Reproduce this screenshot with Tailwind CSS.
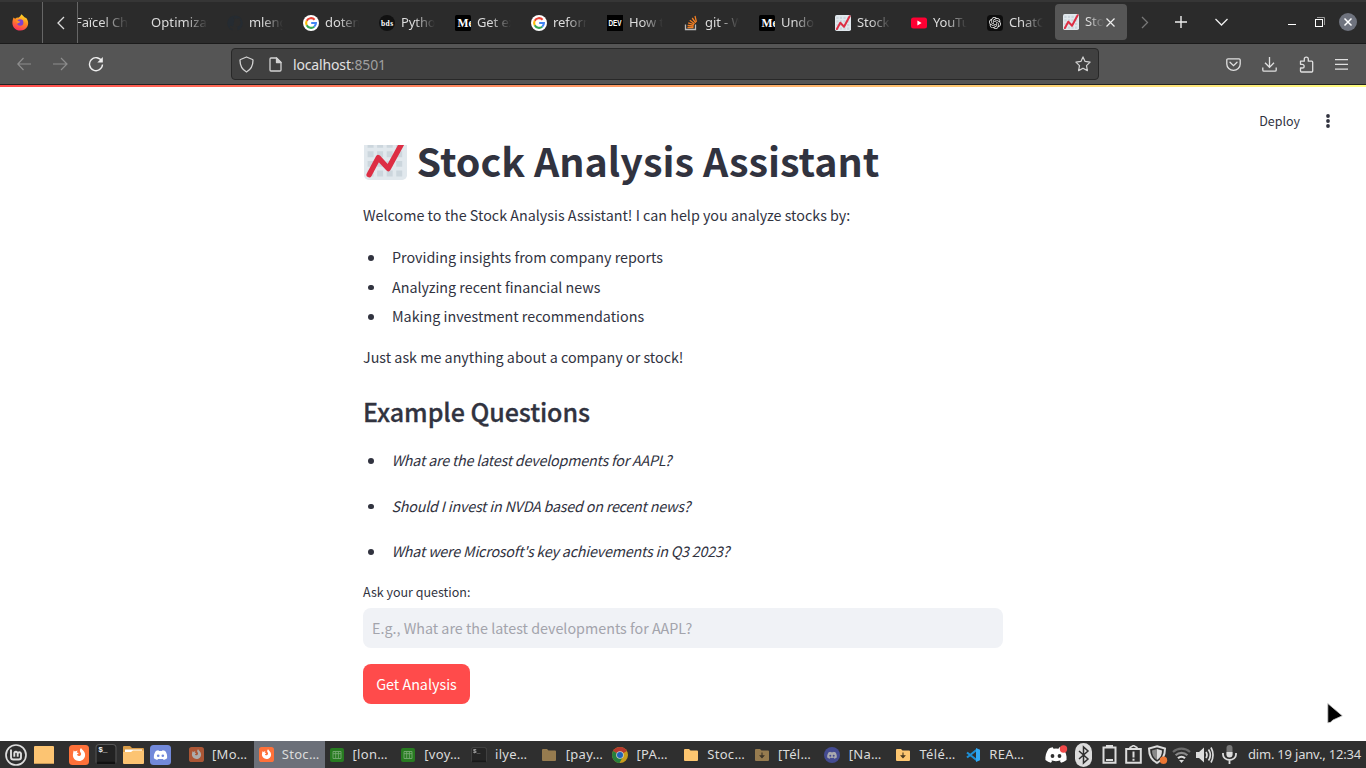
<!DOCTYPE html>
<html lang="fr">
<head>
<meta charset="utf-8">
<title>Stock Analysis Assistant</title>
<script src="https://cdn.jsdelivr.net/npm/@tailwindcss/browser@4"></script>
</head>
<body class="w-[1366px] h-[768px] overflow-hidden bg-white flex flex-col font-['Noto_Sans','Open_Sans',sans-serif]">

<svg width="0" height="0" class="absolute">
  <defs>
    <linearGradient id="ffg" x1="0.7" y1="0" x2="0.3" y2="1"><stop offset="0" stop-color="#ffe226"/><stop offset=".45" stop-color="#ff8a22"/><stop offset="1" stop-color="#ff2a5f"/></linearGradient>
    <symbol id="google" viewBox="0 0 16 16"><circle cx="8" cy="8" r="8" fill="#fff"/><g fill="none" stroke-width="2.1"><path d="M11.6 4.7A4.9 4.9 0 0 0 3.7 5.7" stroke="#ea4335"/><path d="M3.7 5.7a4.9 4.9 0 0 0 0 4.6" stroke="#fbbc05"/><path d="M3.7 10.3a4.9 4.9 0 0 0 7.5 1.4" stroke="#34a853"/><path d="M11.2 11.7A4.9 4.9 0 0 0 12.9 8H8.2" stroke="#4285f4"/></g></symbol>
    <symbol id="chart" viewBox="0 0 36 36"><rect width="36" height="36" rx="4" fill="#e1e8ed"/><path fill="#ccd6dd" d="M3 4h5v5H3zM11 4h5v5h-5zM19 4h5v5h-5zM27 4h5v5h-5zM3 12h5v5H3zM11 12h5v5h-5zM19 12h5v5h-5zM27 12h5v5h-5zM3 20h5v5H3zM11 20h5v5h-5zM19 20h5v5h-5zM27 20h5v5h-5zM3 28h5v5H3zM11 28h5v5h-5zM19 28h5v5h-5zM27 28h5v5h-5z"/><path d="M4.300 31.600L11.900 17.300l8.400 9.100L33 3" fill="none" stroke="#dd2e44" stroke-width="4.500" stroke-linecap="round" stroke-linejoin="round"/></symbol>
    <symbol id="medium" viewBox="0 0 16 16"><rect width="16" height="16" rx="1.500" fill="#000"/><text x="2.500" y="12.300" font-family="Liberation Serif" font-weight="700" font-size="13" fill="#fff" textLength="16" lengthAdjust="spacingAndGlyphs">Me</text></symbol>
    <symbol id="fox" viewBox="0 0 20 20"><rect width="20" height="20" rx="3.500" fill="#ff7139"/><path fill="#fff" d="M4.600 5.500c.5.200 1 .6 1.300 1 .8-.7 2-.9 3-.7-.8.400-1.200 1-1.200 1.700l1.900.4c0 .8-1.200 1-1.700 1.700.3 1.100 1.400 1.700 2.500 1.400 1-.2 1.800-1 1.700-2.200-.1-1.400-1.300-1.900-1.200-3.400 0-.9.500-1.700 1.200-2.300.3 1.500 3.900 3 4 6.600.1 3.700-2.600 6.300-6.100 6.300s-6.300-2.800-6.100-6.200c.1-1.600.5-2.900.7-4.300z"/></symbol>
    <symbol id="term" viewBox="0 0 20 20"><rect x=".5" y=".5" width="19" height="19" rx="3" fill="#222" stroke="#555"/><rect x="1" y="17" width="18" height="2.500" rx="1.200" fill="#111"/><text x="2.500" y="8" font-family="Liberation Mono" font-size="7.500" font-weight="700" fill="#eee">$_</text></symbol>
    <symbol id="folder" viewBox="0 0 14 12"><path fill="#fdc670" d="M0 1q0-1 1-1h4l1.500 1.500H13q1 0 1 1V11q0 1-1 1H1q-1 0-1-1z"/></symbol>
    <symbol id="dfolder" viewBox="0 0 14 12"><path fill="#fdc670" d="M0 1q0-1 1-1h4l1.500 1.500H13q1 0 1 1V11q0 1-1 1H1q-1 0-1-1z"/><path d="M7 3.500v5M5.300 6.800L7 8.700l1.700-1.900z" stroke="#4b3a20" stroke-width="1.100" fill="#4b3a20"/></symbol>
    <symbol id="disc" viewBox="0 0 24 18"><path d="M8.500.3C6.800.6 5.300 1.100 4 1.800 1.200 5.800.1 9.800.5 14.300c1.900 1.500 3.900 2.500 6 3l1.400-2.300c-.8-.3-1.500-.6-2.200-1 4 2 8.600 2 12.600 0-.7.4-1.400.7-2.200 1l1.400 2.300c2.100-.5 4.100-1.500 6-3 .5-5.200-.9-9-3.500-12.500-1.300-.7-2.800-1.200-4.500-1.500l-.8 1.500a16 16 0 0 0-5.400 0z"/></symbol>
    <symbol id="sheet" viewBox="0 0 14 14"><rect width="14" height="14" rx="2" fill="#277b20"/><path fill="none" stroke="#77a873" stroke-width=".9" d="M3 3.500h8v7H3zM5.700 3.500v7M8.400 3.500v7M3 5.700h8"/></symbol>
  </defs>
</svg>

<!-- Tab strip -->
<header class="h-[44px] shrink-0 bg-[#2b2b2b] border-t-2 border-t-[#363636] border-b border-b-[#1b1b1b] flex text-[13px] text-[#dcdcdc] tracking-[-0.1px]">
  <div class="w-[43px] shrink-0 border-r border-[#666] flex items-center justify-center pr-px">
    <svg width="17" height="17" viewBox="0 0 17 17"><path fill="url(#ffg)" d="M1.500 3.500l1.600 1.300L5 3.500l1.200.3L8 2.500 9.500.2l3 3 2 1c2.800 4.200 2 8.800-2 11.300-3.500 2-8 1.200-10.500-1.800C-.5 10.500.4 6.500 1.500 3.500z"/><circle cx="8.200" cy="8.500" r="3.200" fill="#8040d0"/><path d="M4 6c2 0 2 1.600 4.300 1.600-.4 1.600-2 1.300-3 2.200" fill="#ff9125"/></svg>
  </div>
  <div class="w-[35px] shrink-0 border-r border-[#666] flex items-center justify-center pl-[2px]">
    <svg width="10" height="14" viewBox="0 0 10 14" fill="none" stroke="#ddd" stroke-width="1.300"><path d="M8 1L2 7l6 6"/></svg>
  </div>
  <div class="w-[65px] shrink-0 overflow-hidden flex items-center whitespace-nowrap"><span class="w-[54px] ml-[-3px] overflow-hidden mask-r-from-50%">Faïcel Cha</span></div>
  <div class="w-[76px] shrink-0 px-2 flex items-center"><span class="w-[57px] overflow-hidden whitespace-nowrap mask-r-from-60% tracking-[0.1px]">Optimizat</span></div>
  <div class="w-[76px] shrink-0 pl-2 flex items-center gap-[6px]"><svg width="16" height="16" viewBox="0 0 16 16"><path fill="#252b31" d="M8 .5a7.700 7.700 0 0 0-2.500 15v-2c-2 .4-2.500-1-2.800-1.600M8 .5a7.700 7.700 0 0 1 2.500 15V13c0-.8-.3-1.200-.6-1.500 2-.2 3.700-1 3.700-4 0-1-.3-1.800-.9-2.400.1-.3.400-1.200-.1-2.200-.8 0-1.700.5-2.400.9a8 8 0 0 0-4.300 0c-.8-.5-1.600-.9-2.400-.9-.5 1-.2 1.900-.1 2.200-.6.600-.9 1.400-.9 2.400 0 3 1.700 3.800 3.700 4"/></svg><span class="w-[34px] overflow-hidden whitespace-nowrap mask-r-from-40%">mlengi</span></div>
  <div class="w-[76px] shrink-0 pl-2 flex items-center gap-[6px]"><svg width="16" height="16"><use href="#google"/></svg><span class="w-[34px] overflow-hidden whitespace-nowrap mask-r-from-40%">doteny</span></div>
  <div class="w-[76px] shrink-0 pl-2 flex items-center gap-[6px]"><svg width="16" height="16" viewBox="0 0 16 16"><circle cx="8" cy="8" r="8" fill="#111"/><text x="2" y="10.500" font-family="Liberation Serif" font-weight="700" font-size="7.500" fill="#fff" textLength="12">bds</text></svg><span class="w-[34px] overflow-hidden whitespace-nowrap mask-r-from-40%">Python</span></div>
  <div class="w-[76px] shrink-0 pl-2 flex items-center gap-[6px]"><svg width="16" height="16"><use href="#medium"/></svg><span class="w-[34px] overflow-hidden whitespace-nowrap mask-r-from-40%">Get exp</span></div>
  <div class="w-[76px] shrink-0 pl-2 flex items-center gap-[6px]"><svg width="16" height="16"><use href="#google"/></svg><span class="w-[34px] overflow-hidden whitespace-nowrap mask-r-from-40%">reform</span></div>
  <div class="w-[76px] shrink-0 pl-2 flex items-center gap-[6px]"><svg width="16" height="16" viewBox="0 0 16 16"><rect width="16" height="16" fill="#000"/><text x="1.500" y="11" font-family="Liberation Sans Narrow, Liberation Sans" font-weight="700" font-size="8.500" fill="#fff" textLength="13" lengthAdjust="spacingAndGlyphs">DEV</text></svg><span class="w-[34px] overflow-hidden whitespace-nowrap mask-r-from-40%">How to</span></div>
  <div class="w-[76px] shrink-0 pl-2 flex items-center gap-[6px]"><svg width="16" height="16" viewBox="0 0 16 16" fill="none" stroke="#f48024" stroke-width="1.300"><path stroke="#bcbbbb" d="M2.500 9.500v5h10v-5"/><path d="M4.500 12.500h6M4.600 10.300l6 .7M5.200 7.800l5.700 1.900M6.800 5.300l4.800 3.500M9.200 3l3.500 4.900M12 1l1.400 5.800"/></svg><span class="w-[34px] overflow-hidden whitespace-nowrap mask-r-from-40%">git - Wh</span></div>
  <div class="w-[76px] shrink-0 pl-2 flex items-center gap-[6px]"><svg width="16" height="16"><use href="#medium"/></svg><span class="w-[34px] overflow-hidden whitespace-nowrap mask-r-from-40%">Undo a</span></div>
  <div class="w-[76px] shrink-0 pl-2 flex items-center gap-[6px]"><svg width="16" height="16"><use href="#chart"/></svg><span class="w-[34px] overflow-hidden whitespace-nowrap mask-r-from-40%">Stock A</span></div>
  <div class="w-[76px] shrink-0 pl-2 flex items-center gap-[6px]"><svg width="16" height="16" viewBox="0 0 16 16"><rect y="2.500" width="16" height="11" rx="2.500" fill="#ff0033"/><path d="M6.400 5.600v4.800l4.200-2.400z" fill="#fff"/></svg><span class="w-[34px] overflow-hidden whitespace-nowrap mask-r-from-40%">YouTub</span></div>
  <div class="w-[76px] shrink-0 pl-2 flex items-center gap-[6px]"><svg width="16" height="16" viewBox="0 0 16 16"><rect width="16" height="16" rx="3.500" fill="#0d0d0d"/><path transform="translate(2 2) scale(.5)" fill="#f0f0f0" d="M22.2819 9.8211a5.9847 5.9847 0 0 0-.5157-4.9108 6.0462 6.0462 0 0 0-6.5098-2.9A6.0651 6.0651 0 0 0 4.9807 4.1818a5.9847 5.9847 0 0 0-3.9977 2.9 6.0462 6.0462 0 0 0 .7427 7.0966 5.98 5.98 0 0 0 .511 4.9107 6.051 6.051 0 0 0 6.5146 2.9001A5.9847 5.9847 0 0 0 13.2599 24a6.0557 6.0557 0 0 0 5.7718-4.2058 5.9894 5.9894 0 0 0 3.9977-2.9001 6.0557 6.0557 0 0 0-.7475-7.0729zm-9.022 12.6081a4.4755 4.4755 0 0 1-2.8764-1.0408l.1419-.0804 4.7783-2.7582a.7948.7948 0 0 0 .3927-.6813v-6.7369l2.02 1.1686a.071.071 0 0 1 .038.052v5.5826a4.504 4.504 0 0 1-4.4945 4.4944zm-9.6607-4.1254a4.4708 4.4708 0 0 1-.5346-3.0137l.142.0852 4.783 2.7582a.7712.7712 0 0 0 .7806 0l5.8428-3.3685v2.3324a.0804.0804 0 0 1-.0332.0615L9.74 19.9502a4.4992 4.4992 0 0 1-6.1408-1.6464zM2.3408 7.8956a4.485 4.485 0 0 1 2.3655-1.9728V11.6a.7664.7664 0 0 0 .3879.6765l5.8144 3.3543-2.0201 1.1685a.0757.0757 0 0 1-.071 0l-4.8303-2.7865A4.504 4.504 0 0 1 2.3408 7.872zm16.5963 3.8558L13.1038 8.364 15.1192 7.2a.0757.0757 0 0 1 .071 0l4.8303 2.7913a4.4944 4.4944 0 0 1-.6765 8.1042v-5.6772a.79.79 0 0 0-.407-.667zm2.0107-3.0231l-.142-.0852-4.7735-2.7818a.7759.7759 0 0 0-.7854 0L9.409 9.2297V6.8974a.0662.0662 0 0 1 .0284-.0615l4.8303-2.7866a4.4992 4.4992 0 0 1 6.6802 4.66zM8.3065 12.863l-2.02-1.1638a.0804.0804 0 0 1-.038-.0567V6.0742a4.4992 4.4992 0 0 1 7.3757-3.4537l-.142.0805L8.704 5.459a.7948.7948 0 0 0-.3927.6813zm1.0976-2.3654l2.602-1.4998 2.6069 1.4998v2.9994l-2.5974 1.4997-2.6067-1.4997Z"/></svg><span class="w-[34px] overflow-hidden whitespace-nowrap mask-r-from-40%">ChatGP</span></div>
  <div class="w-[72px] h-[36px] mt-[2px] shrink-0 pl-2 flex items-center rounded bg-[#565656]"><svg width="16" height="16"><use href="#chart"/></svg><span class="ml-[6px] w-[19px] overflow-hidden whitespace-nowrap mask-r-from-20%">Stock</span><svg class="ml-[2px]" width="9" height="9" viewBox="0 0 9 9" stroke="#eee" stroke-width="1.200"><path d="M.5.500l8 8M8.500.500l-8 8"/></svg></div>
  <div class="flex-1 flex items-center h-[40px]">
    <svg class="ml-[14px]" width="8" height="13" viewBox="0 0 8 13" fill="none" stroke="#777" stroke-width="1.300"><path d="M1 1l5.500 5.500L1 12"/></svg>
    <svg class="ml-[26px]" width="12" height="12" viewBox="0 0 12 12" stroke="#eee" stroke-width="1.400"><path d="M6 0v12M0 6h12"/></svg>
    <svg class="ml-[28px]" width="13" height="8" viewBox="0 0 13 8" fill="none" stroke="#eee" stroke-width="1.300"><path d="M.5 1l6 6 6-6"/></svg>
    <svg class="ml-[60px] mt-[4px]" width="8" height="1"><rect width="8" height="1" fill="#fff"/></svg>
    <svg class="ml-[19px]" width="10" height="10" viewBox="0 0 10 10" fill="none"><path d="M2 .5h7.500V8" stroke="#999"/><rect x=".5" y="2.500" width="7" height="7" stroke="#fff"/></svg>
    <svg class="ml-[14px]" width="18" height="18" viewBox="0 0 18 18"><circle cx="9" cy="9" r="9" fill="#6f737e"/><path d="M5.500 5.500l7 7M12.500 5.500l-7 7" stroke="#fff" stroke-width="1.500"/></svg>
  </div>
</header>

<!-- Navigation toolbar -->
<nav class="h-[41px] shrink-0 bg-[#555] border-b border-b-[#222] flex items-center">
  <svg class="ml-[17px]" width="15" height="14" viewBox="0 0 15 14" fill="none" stroke="#8d8d8d" stroke-width="1.200"><path d="M14 7H.8M6.500 1L.8 7l5.700 6"/></svg>
  <svg class="ml-[21px]" width="15" height="14" viewBox="0 0 15 14" fill="none" stroke="#8d8d8d" stroke-width="1.200"><path d="M0 7h13.700M8 1l6 6-6 6"/></svg>
  <svg class="ml-[20px]" width="16" height="16" viewBox="0 0 16 16" fill="none" stroke="#eee" stroke-width="1.400"><path d="M13.800 5.200A6.500 6.500 0 1 0 14.500 8.500"/><path d="M14.800 1v5.500H9.300z" fill="#eee" stroke="none"/></svg>
  <div class="ml-[127px] w-[868px] h-[32px] rounded border border-[#282828] bg-[#404040] flex items-center">
    <svg class="ml-[7px]" width="15" height="17" viewBox="0 0 15 17" fill="none" stroke="#d2d2d2" stroke-width="1.300" stroke-linejoin="round"><path d="M7.500 1l6 2.500q.5.200.5.800c0 5-1.500 9-6.500 11.700C2.500 13.300 1 9.300 1 4.300q0-.6.500-.8z"/></svg>
    <svg class="ml-[15px]" width="13" height="15" viewBox="0 0 13 15" fill="none" stroke="#d2d2d2" stroke-width="1.300" stroke-linejoin="round"><path d="M2 1h5.500L12 5.500V13q0 1-1 1H2q-1 0-1-1V2q0-1 1-1z"/><path d="M7.500 1v4.500H12z" fill="#d2d2d2"/></svg>
    <span class="ml-[11px] text-[14px] text-[#e2e2e2] tracking-[-0.15px]">localhost<span class="text-[#9f9f9f]">:8501</span></span>
    <svg class="ml-auto mr-[7px]" width="16" height="16" viewBox="0 0 16 16" fill="none" stroke="#d2d2d2" stroke-width="1.200" stroke-linejoin="round"><path d="M8 .9l2.100 4.500 5 .7-3.600 3.500.9 5L8 12.200l-4.400 2.400.9-5L.9 6.100l5-.7z"/></svg>
  </div>
  <svg class="ml-[127px]" width="15" height="13" viewBox="0 0 15 13" fill="none" stroke="#e0e0e0" stroke-width="1.300"><path d="M2 .8h11q1.200 0 1.200 1.200v4a6.700 6.300 0 0 1-13.400 0V2Q.8.800 2 .8z"/><path d="M4 4.300l3.500 3.400L11 4.300" stroke-linecap="round"/></svg>
  <svg class="ml-[21px]" width="15" height="15" viewBox="0 0 15 15" fill="none" stroke="#e0e0e0" stroke-width="1.300"><path d="M7.500 0v10M3 5.800l4.500 4.500L12 5.800M.8 10.500V13q0 1.200 1.200 1.200h11q1.200 0 1.200-1.200v-2.500"/></svg>
  <svg class="ml-[22px]" width="15" height="17" viewBox="0 0 15 17" fill="none" stroke="#e0e0e0" stroke-width="1.300" stroke-linejoin="round"><path d="M1.500 7V5.200h3.800V3.100a2 2 0 0 1 4 0v2.100h3.400q1 0 1 1V15q0 1-1 1H2.500q-1 0-1-1v-3H3.300a1.800 1.800 0 0 0 0-3.700H1.500z"/></svg>
  <svg class="ml-[21px]" width="13" height="11" viewBox="0 0 13 11" fill="#e0e0e0"><path d="M0 0h13v1.200H0zM0 4.800h13V6H0zM0 9.600h13v1.200H0z"/></svg>
</nav>

<!-- Page -->
<div class="h-[2px] shrink-0 bg-linear-to-r/srgb from-[#ff4b4b] to-[#fffd80]"></div>
<div class="flex-1 min-h-0 flex flex-col text-[#31333f] font-['Noto_Sans_CJK_SC',sans-serif]">
  <div class="h-[58px] shrink-0 flex items-center justify-end pt-[10px] pr-[36px]">
    <span class="text-[12.500px]">Deploy</span>
    <svg class="ml-[26px]" width="4" height="14" viewBox="0 0 4 14" fill="#31333f"><circle cx="2" cy="2" r="1.900"/><circle cx="2" cy="7" r="1.900"/><circle cx="2" cy="12" r="1.900"/></svg>
  </div>
  <main class="w-[640px] ml-[363px] flex flex-col text-[14.320px] whitespace-nowrap">
    <h1 class="h-[35px] flex items-start font-bold text-[39.450px] leading-[34px]">
      <svg class="shrink-0 ml-[0.500px]" width="43" height="35" viewBox="0 8 43 35"><use href="#chart" width="43" height="43"/></svg>
      <span class="ml-[10px] -mt-[2px]">Stock Analysis Assistant</span>
    </h1>
    <p class="mt-[22px] leading-[26px]">Welcome to the Stock Analysis Assistant! I can help you analyze stocks by:</p>
    <ul class="mt-[16px] flex flex-col gap-[3.500px] leading-[26px]">
      <li class="flex items-center before:size-[5.500px] before:rounded-full before:bg-[#31333f] before:ml-[5px] before:mr-[18.500px] before:mt-[2px]">Providing insights from company reports</li>
      <li class="flex items-center before:size-[5.500px] before:rounded-full before:bg-[#31333f] before:ml-[5px] before:mr-[18.500px] before:mt-[2px]">Analyzing recent financial news</li>
      <li class="flex items-center before:size-[5.500px] before:rounded-full before:bg-[#31333f] before:ml-[5px] before:mr-[18.500px] before:mt-[2px]">Making investment recommendations</li>
    </ul>
    <p class="mt-[15px] leading-[26px]">Just ask me anything about a company or stock!</p>
    <h3 class="mt-[24px] leading-[34px] text-[25.060px] font-medium tracking-[-0.08px] [-webkit-text-stroke:0.300px_#31333f]">Example Questions</h3>
    <ul class="mt-[19px] flex flex-col gap-[19.500px] leading-[26px] italic tracking-[-0.210px]">
      <li class="flex items-center before:size-[5.500px] before:rounded-full before:bg-[#31333f] before:ml-[5px] before:mr-[18px] before:mt-[2px]">What are the latest developments for AAPL?</li>
      <li class="flex items-center before:size-[5.500px] before:rounded-full before:bg-[#31333f] before:ml-[5px] before:mr-[18px] before:mt-[2px]">Should I invest in NVDA based on recent news?</li>
      <li class="flex items-center before:size-[5.500px] before:rounded-full before:bg-[#31333f] before:ml-[5px] before:mr-[18px] before:mt-[2px]">What were Microsoft's key achievements in Q3 2023?</li>
    </ul>
    <label class="mt-[18px] leading-[20px] text-[12.500px]">Ask your question:</label>
    <div class="mt-[6px] h-[40px] rounded-lg bg-[#f0f2f6] pl-[9px] flex items-center text-[#a3a4ac]">E.g., What are the latest developments for AAPL?</div>
    <button class="mt-[16px] w-[107px] h-[40px] rounded-lg bg-[#ff4b4b] text-white flex items-center justify-center">Get Analysis</button>
  </main>
</div>

<!-- Desktop panel -->
<footer class="h-[27px] shrink-0 bg-[#2f2f2f] flex items-center text-[13px] text-[#dcdcdc] whitespace-nowrap">
  <svg class="ml-[5px]" width="22" height="22" viewBox="0 0 22 22" fill="none" stroke="#ddd"><circle cx="11" cy="11" r="10" stroke-width="1.700"/><path stroke-width="1.900" d="M6 5.500v7.700q0 2.300 2.300 2.300h5.400q2.300 0 2.300-2.300V9.500a1.700 1.700 0 0 0-3.300 0v3.300M12.700 9.500a1.700 1.700 0 0 0-3.400 0v3.300"/></svg>
  <svg class="ml-[7px]" width="20" height="18"><rect width="20" height="18" rx="1" fill="#fcc472"/><rect y="17" width="20" height="1" fill="#c79a57"/></svg>
  <svg class="ml-[15px]" width="20" height="20"><use href="#fox"/></svg>
  <svg class="ml-[6px]" width="22" height="21"><use href="#term"/></svg>
  <svg class="ml-[6px]" width="21" height="18" viewBox="0 0 21 18"><path fill="#d99c48" d="M0 1q0-1 1-1h6l2 2h11q1 0 1 1v5H0z"/><path fill="#fff" d="M2 3.500h17v3H2z"/><path fill="#fcc472" d="M0 6h8l2-1.500h11V17q0 1-1 1H1q-1 0-1-1z"/></svg>
  <svg class="ml-[6px]" width="21" height="20" viewBox="0 0 21 20"><rect width="21" height="20" rx="3.500" fill="#7289da"/><use href="#disc" x="3.500" y="5" width="14" height="10.500" fill="#fff"/><circle cx="8.200" cy="10.800" r="1.300" fill="#7289da"/><circle cx="12.800" cy="10.800" r="1.300" fill="#7289da"/></svg>
  <div class="ml-[12px] w-[849px] h-[27px] grid grid-cols-12 tracking-[0.3px]">
    <div class="flex items-center pl-[6px]"><svg class="opacity-60" width="15" height="15"><use href="#fox"/></svg><span class="ml-[8px]">[Mo…</span></div>
    <div class="flex items-center pl-[5px] bg-[#6c7079]"><svg width="15" height="15"><use href="#fox"/></svg><span class="ml-[8px]">Stoc…</span></div>
    <div class="flex items-center pl-[5px]"><svg width="14" height="14"><use href="#sheet"/></svg><span class="ml-[9px]">[lon…</span></div>
    <div class="flex items-center pl-[6px]"><svg width="14" height="14"><use href="#sheet"/></svg><span class="ml-[9px]">[voy…</span></div>
    <div class="flex items-center pl-[5px]"><svg class="opacity-70" width="16" height="16"><use href="#term"/></svg><span class="ml-[8px]">ilye…</span></div>
    <div class="flex items-center pl-[5px]"><svg class="opacity-50" width="14" height="12"><use href="#folder"/></svg><span class="ml-[10px]">[pay…</span></div>
    <div class="flex items-center pl-[4px]"><svg class="opacity-75" width="16" height="16" viewBox="0 0 16 16"><circle cx="8" cy="8" r="8" fill="#fbc116"/><path d="M8 8L1.100 4A8 8 0 0 1 14.900 4z" fill="#e33b2e"/><path d="M8 8L1.100 4A8 8 0 0 0 7.500 16L11 9.500z" fill="#249a41"/><circle cx="8" cy="8" r="3.800" fill="#fff"/><circle cx="8" cy="8" r="3" fill="#1a73e8"/></svg><span class="ml-[9px]">[PA…</span></div>
    <div class="flex items-center pl-[6px]"><svg width="14" height="12"><use href="#folder"/></svg><span class="ml-[9px]">Stoc…</span></div>
    <div class="flex items-center pl-[6px]"><svg class="opacity-50" width="14" height="12"><use href="#dfolder"/></svg><span class="ml-[9px]">[Tél…</span></div>
    <div class="flex items-center pl-[4px]"><svg width="16" height="16" viewBox="0 0 16 16"><circle cx="8" cy="8" r="8" fill="#444b91"/><use href="#disc" x="3" y="4.500" width="10" height="7.500" fill="#a9a9ae"/><circle cx="6.300" cy="8.700" r="1" fill="#444b91"/><circle cx="9.700" cy="8.700" r="1" fill="#444b91"/></svg><span class="ml-[9px]">[Na…</span></div>
    <div class="flex items-center pl-[5px]"><svg width="14" height="12"><use href="#dfolder"/></svg><span class="ml-[10px]">Télé…</span></div>
    <div class="flex items-center pl-[5px]"><svg width="14" height="14" viewBox="0 0 14 14"><path d="M10.500 2L1 9.500M10.500 12L1 4.500" stroke="#1d8fd6" stroke-width="2.200"/><path d="M10 0l4 1.700v10.600L10 14z" fill="#2fa8f5"/></svg><span class="ml-[9px]">REA…</span></div>
  </div>
  <div class="ml-[13px] flex items-center">
    <svg width="24" height="20" viewBox="0 0 24 20"><use href="#disc" x="0" y="2" width="22" height="16.500" fill="#fff"/><circle cx="7.500" cy="11" r="1.900" fill="#2f2f2f"/><circle cx="14.500" cy="11" r="1.900" fill="#2f2f2f"/><circle cx="18.500" cy="4" r="3.700" fill="#f04848"/></svg>
    <svg class="ml-[6px]" width="17" height="24" viewBox="0 0 17 24"><rect width="17" height="24" rx="8.500" fill="#dcdcdc"/><path d="M4 8l9 8-4.500 4V4L13 8l-9 8" fill="none" stroke="#2f2f2f" stroke-width="1.500"/></svg>
    <svg class="ml-[10px]" width="15" height="19" viewBox="0 0 15 19"><path d="M5 2V1h5v1M1.500 2.500h12v15.300h-12z" fill="none" stroke="#dcdcdc" stroke-width="2"/><path d="M4 14h7v2H4z" fill="#dcdcdc"/></svg>
    <svg class="ml-[8px]" width="17" height="19" viewBox="0 0 17 19"><path d="M1.200 4h14.600v13.800H1.200z" fill="none" stroke="#dcdcdc" stroke-width="2"/><path d="M5 4V2.500L8.500.500 12 2.500V4" fill="none" stroke="#dcdcdc" stroke-width="1.500"/><path d="M7.500 6.500h2v6h-2zM7.500 13.800h2v2h-2z" fill="#dcdcdc"/></svg>
    <svg class="ml-[6px]" width="20" height="19" viewBox="0 0 20 19"><path d="M9 1.200l8 2.300c0 6.500-2 11.500-8 14.300C3 15 1 10 1 3.500z" fill="none" stroke="#dcdcdc" stroke-width="2"/><path d="M9 4v11c-3.700-2.300-5-5.500-5-9.500z" fill="#888"/><path d="M9 4v11c3.700-2.300 5-5.500 5-9.500z" fill="#dcdcdc"/><circle cx="15.500" cy="15.200" r="3.700" fill="#ee7733"/></svg>
    <svg class="ml-[4px]" width="19" height="16" viewBox="0 0 19 16" fill="none" stroke-width="2.200"><path d="M1 5a12.500 12.500 0 0 1 17 0" stroke="#6a6a6a"/><path d="M3.600 8.200a8.700 8.700 0 0 1 11.800 0" stroke="#8a8a8a"/><path d="M6 11.300a5 5 0 0 1 7 0" stroke="#dcdcdc"/><path d="M9.500 16l-2.500-3h5z" fill="#dcdcdc"/></svg>
    <svg class="ml-[5px]" width="18" height="18" viewBox="0 0 18 18"><path d="M0 6h3l5-4.500v15L3 12H0z" fill="#dcdcdc"/><path d="M10 6q2 3 0 6M12.500 3.500q3.700 5.500 0 11M15 1.500q4 7.500 0 15" fill="none" stroke="#dcdcdc" stroke-width="1.700"/></svg>
    <svg class="ml-[8px]" width="15" height="19" viewBox="0 0 15 19"><rect x="4.500" width="6" height="12" rx="3" fill="#777"/><path d="M4.500 7h6v2.500a3 3 0 0 1-6 0z" fill="#dcdcdc"/><path d="M1 8v1.500a6.500 5.500 0 0 0 13 0V8M7.500 15v4" fill="none" stroke="#dcdcdc" stroke-width="1.800"/></svg>
    <span class="ml-[11px] tracking-[-0.2px]">dim. 19 janv., 12:34</span>
  </div>
</footer>

<!-- Mouse pointer -->
<svg class="absolute left-[1326px] top-[702px]" width="18" height="24" viewBox="0 0 18 24"><path d="M1.800 1.500v19.300q2.500.5 5.200-2.800l9.300-4.200z" fill="#000" stroke="#ccc" stroke-width=".8" stroke-linejoin="round"/></svg>
</body>
</html>
